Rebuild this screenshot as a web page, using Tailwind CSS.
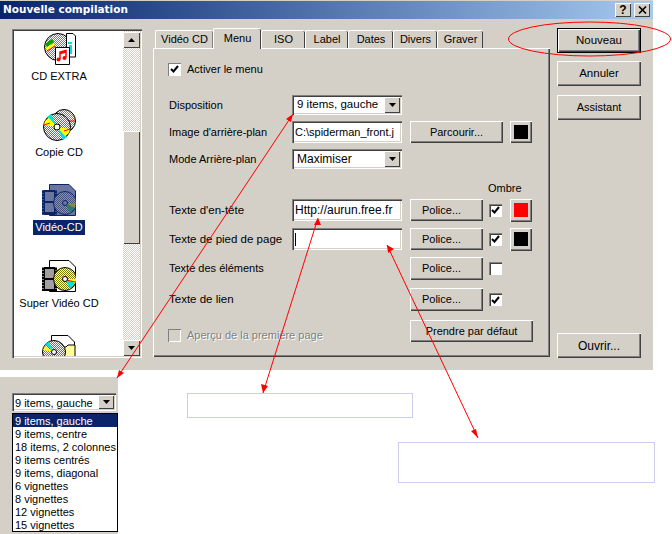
<!DOCTYPE html>
<html lang="fr">
<head>
  <meta charset="UTF-8" />
  <title>Nouvelle compilation</title>
  <script src="https://cdn.jsdelivr.net/npm/@tailwindcss/browser@4"></script>
</head>
<body class="bg-white">
  <div class="relative w-[672px] h-[534px] overflow-hidden bg-white font-['Liberation_Sans',Arial,sans-serif] text-[11px] text-black">

    <!-- fenetre -->
    <div class="w-[653px] h-[370px] bg-[#d4d0c8] pt-px flex flex-col">
      <div class="h-[18px] flex items-center justify-between pl-[3px] pr-[3px] bg-gradient-to-r from-[#0a246a] to-[#a6caf0]">
        <span class="font-['DejaVu_Sans',sans-serif] font-bold text-[10.5px] text-white">Nouvelle compilation</span>
        <div class="flex gap-[3px]">
          <div class="w-[16px] h-[14px] bg-[#d4d0c8] flex items-center justify-center font-bold text-[12px] leading-none shadow-[inset_1px_1px_0_#fff,inset_-1px_-1px_0_#404040]">?</div>
          <div class="w-[16px] h-[14px] bg-[#d4d0c8] flex items-center justify-center shadow-[inset_1px_1px_0_#fff,inset_-1px_-1px_0_#404040]">
            <svg width="9" height="8" viewBox="0 0 9 8"><path d="M1 0.5L8 7.5M8 0.5L1 7.5" stroke="#000" stroke-width="1.6" fill="none"/></svg>
          </div>
        </div>
      </div>

      <div class="flex pl-[12px] pt-[9px]">
        <!-- liste des types -->
        <div class="w-[130px] h-[329px] mt-px p-[2px] flex shadow-[inset_1px_1px_0_#808080,inset_2px_2px_0_#404040,inset_-1px_-1px_0_#fff,inset_-2px_-2px_0_#d4d0c8]">
          <div class="w-[109px] h-[325px] bg-white overflow-hidden pt-[2px]">
            <div class="w-[90px] flex flex-col items-center">
              <div class="h-[75.5px] flex flex-col items-center shrink-0">
                <svg width="34" height="32" viewBox="0 0 34 32">
                  <defs>
                    <pattern id="grisTrame" width="2" height="2" patternUnits="userSpaceOnUse"><rect width="2" height="2" fill="#fff"/><rect width="1" height="1" fill="#808080"/><rect x="1" y="1" width="1" height="1" fill="#808080"/></pattern>
                    <pattern id="oliveTrame" width="2" height="2" patternUnits="userSpaceOnUse"><rect width="2" height="2" fill="#fff"/><rect width="1" height="1" fill="#808000"/><rect x="1" y="1" width="1" height="1" fill="#808000"/></pattern>
                    <pattern id="bleuTrame" width="2" height="2" patternUnits="userSpaceOnUse"><rect width="2" height="2" fill="#8a92b4"/><rect width="1" height="1" fill="#40507f"/><rect x="1" y="1" width="1" height="1" fill="#40507f"/></pattern>
                  </defs>
                  <circle cx="16" cy="14" r="13.5" fill="url(#grisTrame)" stroke="#000"/>
                  <path d="M3 11L10 6L12 9L5 14Z" fill="#00a000"/>
                  <path d="M3.5 15L12 10L13 12L5 18Z" fill="#ff0"/>
                  <path d="M5 18L13 13" stroke="#f00"/>
                  <path d="M24.5 0.5H31L33.500 3V24H24.500Z" fill="#fff" stroke="#000"/>
                  <rect x="26" y="9" width="4" height="2" fill="#00e0e0"/>
                  <rect x="27" y="12" width="3" height="9" fill="#00e0e0"/>
                  <path d="M13.500 14.500H27.500V31.500H13.500Z" fill="#fff" stroke="#000"/>
                  <path d="M18 26V19L24 17.500V24.500M18 20.500L24 19" stroke="#f00" stroke-width="1.500" fill="none"/>
                  <circle cx="16.500" cy="26.500" r="2" fill="#f00"/><circle cx="22.500" cy="25" r="2" fill="#f00"/>
                </svg>
                <span class="mt-1 leading-[15px] whitespace-nowrap">CD EXTRA</span>
              </div>
              <div class="h-[75.5px] flex flex-col items-center shrink-0">
                <svg width="34" height="32" viewBox="0 0 34 32">
                  <circle cx="22" cy="12" r="11.500" fill="url(#grisTrame)" stroke="#000"/>
                  <path d="M23 12L33 12" stroke="#f00"/>
                  <circle cx="15" cy="18" r="13.500" fill="url(#oliveTrame)" stroke="#000"/>
                  <path d="M15 18L5 8L9 5Z" fill="#00e0e0"/>
                  <path d="M15 18L2 16L3 12L7 9Z" fill="#ff0"/>
                  <path d="M15 18L25 28L21 31Z" fill="#00e0e0"/>
                  <path d="M15 18L28 20L27 24L23 27Z" fill="#ff0"/>
                  <path d="M2 16L8 14M22 22L28 20" stroke="#f00"/>
                  <circle cx="15" cy="18" r="3" fill="#fff" stroke="#000"/>
                </svg>
                <span class="mt-1 leading-[15px] whitespace-nowrap">Copie CD</span>
              </div>
              <div class="h-[75.5px] flex flex-col items-center shrink-0">
                <svg width="34" height="32" viewBox="0 0 34 32">
                  <path d="M7.500 0.500H27L33.500 7V31.500H7.500Z" fill="#6a76a0" stroke="#0a246a"/>
                  <rect x="0" y="6" width="15" height="25" fill="#0a246a"/>
                  <rect x="3" y="8" width="9" height="9" fill="#6a76a0"/>
                  <rect x="3" y="19" width="9" height="9" fill="#6a76a0"/>
                  <path d="M1 6V31M14 6V31" stroke="#6a76a0" stroke-dasharray="1 2"/>
                  <circle cx="23" cy="19" r="11.500" fill="url(#bleuTrame)" stroke="#0a246a"/>
                  <path d="M23 19L33 24L28 29Z" fill="#2a7a7a"/>
                  <path d="M23 19L33 20L33 24Z" fill="#8a8a40"/>
                  <circle cx="23" cy="19" r="2.500" fill="#6a76a0" stroke="#0a246a"/>
                </svg>
                <span class="mt-1 px-[2px] leading-[15px] whitespace-nowrap bg-[#0a246a] text-white">Vidéo-CD</span>
              </div>
              <div class="h-[75.5px] flex flex-col items-center shrink-0">
                <svg width="34" height="32" viewBox="0 0 34 32">
                  <path d="M7.500 0.500H27L33.500 7V31.500H7.500Z" fill="#fff" stroke="#000"/>
                  <rect x="0" y="7" width="15" height="24" fill="#000"/>
                  <rect x="3" y="9" width="9" height="9" fill="#a0a0a0"/>
                  <rect x="3" y="20" width="9" height="9" fill="#a0a0a0"/>
                  <path d="M1 7V31M14 7V31" stroke="#fff" stroke-dasharray="1 2"/>
                  <circle cx="23" cy="19" r="11.500" fill="url(#oliveTrame)" stroke="#000"/>
                  <path d="M23 19L33 23L28 29Z" fill="#00e0e0"/>
                  <path d="M23 19L34 19L33 23Z" fill="#ff0"/>
                  <path d="M24 20L33 22" stroke="#f00"/>
                  <circle cx="23" cy="19" r="2.500" fill="#fff" stroke="#000"/>
                </svg>
                <span class="mt-1 leading-[15px] whitespace-nowrap">Super Vidéo CD</span>
              </div>
              <div class="h-[75.5px] flex flex-col items-center shrink-0">
                <svg width="34" height="32" viewBox="0 0 34 32">
                  <path d="M9.500 0.500H26L32.500 7V31.500H9.500Z" fill="#fff" stroke="#000"/>
                  <path d="M17 12H24L26 10H33V31H17Z" fill="#ffff99" stroke="#000"/>
                  <circle cx="12" cy="17" r="11.500" fill="url(#oliveTrame)" stroke="#000"/>
                  <path d="M12 17L3 9L7 7Z" fill="#00e0e0"/>
                  <path d="M12 17L1 15L3 11Z" fill="#ff0"/>
                  <circle cx="12" cy="17" r="2.500" fill="#fff" stroke="#000"/>
                </svg>
              </div>
            </div>
          </div>
          <!-- ascenseur -->
          <div class="w-[17px] h-[325px] flex flex-col bg-[repeating-conic-gradient(#d4d0c8_0_25%,#fff_0_50%)] bg-[length:2px_2px]">
            <div class="h-[16px] mt-px flex items-center justify-center bg-[#d4d0c8] shadow-[inset_1px_1px_0_#fff,inset_-1px_-1px_0_#404040]">
              <svg width="7" height="4" viewBox="0 0 7 4"><path d="M3.500 0L7 4H0Z" fill="#000"/></svg>
            </div>
            <div class="h-[113px] mt-[83px] bg-[#d4d0c8] shadow-[inset_1px_1px_0_#fff,inset_-1px_-1px_0_#404040]"></div>
            <div class="h-[16px] mt-auto flex items-center justify-center bg-[#d4d0c8] shadow-[inset_1px_1px_0_#fff,inset_-1px_-1px_0_#404040]">
              <svg width="7" height="4" viewBox="0 0 7 4"><path d="M0 0H7L3.500 4Z" fill="#000"/></svg>
            </div>
          </div>
        </div>

        <!-- onglets -->
        <div class="w-[397px] ml-[11px]">
          <div class="h-[20px] flex pl-[2px] items-end">
            <div class="w-[58px] h-[18px] flex items-center justify-center rounded-t-[2px] border-t border-l border-white shadow-[inset_-1px_0_0_#808080]">Vidéo CD</div>
            <div class="w-[48px] h-[21px] -mb-px pb-[2px] relative flex items-center justify-center bg-[#d4d0c8] rounded-t-[2px] border-t border-l border-white shadow-[inset_-1px_0_0_#404040]">Menu</div>
            <div class="w-[44px] h-[18px] flex items-center justify-center rounded-t-[2px] border-t border-l border-white shadow-[inset_-1px_0_0_#404040]">ISO</div>
            <div class="w-[43px] h-[18px] flex items-center justify-center rounded-t-[2px] border-t border-l border-white shadow-[inset_-1px_0_0_#404040]">Label</div>
            <div class="w-[45px] h-[18px] flex items-center justify-center rounded-t-[2px] border-t border-l border-white shadow-[inset_-1px_0_0_#404040]">Dates</div>
            <div class="w-[44px] h-[18px] flex items-center justify-center rounded-t-[2px] border-t border-l border-white shadow-[inset_-1px_0_0_#404040]">Divers</div>
            <div class="w-[46px] h-[18px] flex items-center justify-center rounded-t-[2px] border-t border-l border-white shadow-[inset_-1px_0_0_#404040]">Graver</div>
          </div>
          <div class="h-[309px] pl-[15px] pt-[13px] border-t border-l border-white shadow-[inset_-1px_-1px_0_#404040,inset_-2px_-2px_0_#808080]">
            <div class="flex items-center h-[14px] -ml-px">
              <div class="w-[13px] h-[13px] bg-white flex items-center justify-center shadow-[inset_1px_1px_0_#808080,inset_-1px_-1px_0_#fff]">
                <svg width="9" height="8" viewBox="0 0 9 8"><path d="M1 4L3.500 6.500L8 1" stroke="#000" stroke-width="2" fill="none"/></svg>
              </div>
              <span class="ml-[6px]">Activer le menu</span>
            </div>

            <div class="flex items-center h-[20px] mt-[19px]">
              <span class="w-[123px]">Disposition</span>
              <div class="w-[110px] h-[20px] bg-white pl-[5px] pr-[2px] flex items-center justify-between text-[11.5px] shadow-[inset_1px_1px_0_#808080,inset_2px_2px_0_#404040,inset_-1px_-1px_0_#fff,inset_-2px_-2px_0_#d4d0c8]">
                <span>9 items, gauche</span>
                <div class="w-[16px] h-[16px] bg-[#d4d0c8] flex items-center justify-center shadow-[inset_1px_1px_0_#fff,inset_-1px_-1px_0_#404040]">
                  <svg width="7" height="4" viewBox="0 0 7 4"><path d="M0 0H7L3.500 4Z" fill="#000"/></svg>
                </div>
              </div>
            </div>

            <div class="flex items-center h-[22px] mt-[6px]">
              <span class="w-[123px]">Image d'arrière-plan</span>
              <div class="w-[110px] h-[22px] bg-white pl-[3px] pr-[2px] flex items-center overflow-hidden whitespace-nowrap shadow-[inset_1px_1px_0_#808080,inset_2px_2px_0_#404040,inset_-1px_-1px_0_#fff,inset_-2px_-2px_0_#d4d0c8]">C:\spiderman_front.j</div>
              <div class="w-[93px] h-[22px] ml-[8px] bg-[#d4d0c8] flex items-center justify-center shadow-[inset_1px_1px_0_#fff,inset_-1px_-1px_0_#404040,inset_-2px_-2px_0_#808080]">Parcourir...</div>
              <div class="w-[22px] h-[22px] ml-[7px] flex items-center justify-center shadow-[inset_1px_1px_0_#fff,inset_-1px_-1px_0_#404040,inset_-2px_-2px_0_#808080]"><div class="w-[14px] h-[14px] bg-black"></div></div>
            </div>

            <div class="flex items-center h-[20px] mt-[6px]">
              <span class="w-[123px]">Mode Arrière-plan</span>
              <div class="w-[110px] h-[20px] bg-white pl-[5px] pr-[2px] flex items-center justify-between shadow-[inset_1px_1px_0_#808080,inset_2px_2px_0_#404040,inset_-1px_-1px_0_#fff,inset_-2px_-2px_0_#d4d0c8]">
                <span class="text-[12px]">Maximiser</span>
                <div class="w-[16px] h-[16px] bg-[#d4d0c8] flex items-center justify-center shadow-[inset_1px_1px_0_#fff,inset_-1px_-1px_0_#404040]">
                  <svg width="7" height="4" viewBox="0 0 7 4"><path d="M0 0H7L3.500 4Z" fill="#000"/></svg>
                </div>
              </div>
            </div>

            <div class="h-[15px] leading-[15px] mt-[12px] ml-[319px]">Ombre</div>

            <div class="flex items-center h-[22px] mt-[3px]">
              <span class="w-[123px] pt-[2px] text-[11.5px]">Texte d'en-tête</span>
              <div class="w-[110px] h-[22px] bg-white pl-[3px] flex items-center whitespace-nowrap text-[12px] shadow-[inset_1px_1px_0_#808080,inset_2px_2px_0_#404040,inset_-1px_-1px_0_#fff,inset_-2px_-2px_0_#d4d0c8]">Http://aurun.free.fr</div>
              <div class="w-[73px] h-[22px] ml-[8px] pr-[10px] flex items-center justify-center shadow-[inset_1px_1px_0_#fff,inset_-1px_-1px_0_#404040,inset_-2px_-2px_0_#808080]">Police...</div>
              <div class="w-[13px] h-[13px] ml-[6px] bg-white flex items-center justify-center shadow-[inset_1px_1px_0_#808080,inset_2px_2px_0_#404040,inset_-1px_-1px_0_#fff]">
                <svg width="9" height="8" viewBox="0 0 9 8"><path d="M1 4L3.500 6.500L8 1" stroke="#000" stroke-width="2" fill="none"/></svg>
              </div>
              <div class="w-[22px] h-[23px] ml-[8px] flex items-center justify-center shadow-[inset_1px_1px_0_#fff,inset_-1px_-1px_0_#404040,inset_-2px_-2px_0_#808080]"><div class="w-[14px] h-[14px] bg-[#ff0000]"></div></div>
            </div>

            <div class="flex items-center h-[22px] mt-[7px]">
              <span class="w-[123px] pt-[2px] text-[11.5px]">Texte de pied de page</span>
              <div class="w-[110px] h-[22px] bg-white pl-[3px] flex items-center shadow-[inset_1px_1px_0_#808080,inset_2px_2px_0_#404040,inset_-1px_-1px_0_#fff,inset_-2px_-2px_0_#d4d0c8]"><div class="w-px h-[13px] bg-black"></div></div>
              <div class="w-[73px] h-[22px] ml-[8px] pr-[10px] flex items-center justify-center shadow-[inset_1px_1px_0_#fff,inset_-1px_-1px_0_#404040,inset_-2px_-2px_0_#808080]">Police...</div>
              <div class="w-[13px] h-[13px] ml-[6px] bg-white flex items-center justify-center shadow-[inset_1px_1px_0_#808080,inset_2px_2px_0_#404040,inset_-1px_-1px_0_#fff]">
                <svg width="9" height="8" viewBox="0 0 9 8"><path d="M1 4L3.500 6.500L8 1" stroke="#000" stroke-width="2" fill="none"/></svg>
              </div>
              <div class="w-[22px] h-[23px] ml-[8px] flex items-center justify-center shadow-[inset_1px_1px_0_#fff,inset_-1px_-1px_0_#404040,inset_-2px_-2px_0_#808080]"><div class="w-[14px] h-[14px] bg-black"></div></div>
            </div>

            <div class="flex items-center h-[23px] mt-[7px]">
              <span class="w-[241px]">Texte des éléments</span>
              <div class="w-[73px] h-[23px] pr-[10px] flex items-center justify-center shadow-[inset_1px_1px_0_#fff,inset_-1px_-1px_0_#404040,inset_-2px_-2px_0_#808080]">Police...</div>
              <div class="w-[13px] h-[13px] ml-[6px] bg-white shadow-[inset_1px_1px_0_#808080,inset_2px_2px_0_#404040,inset_-1px_-1px_0_#fff]"></div>
            </div>

            <div class="flex items-center h-[23px] mt-[8px]">
              <span class="w-[241px] pt-px text-[11.5px]">Texte de lien</span>
              <div class="w-[73px] h-[23px] pr-[10px] flex items-center justify-center shadow-[inset_1px_1px_0_#fff,inset_-1px_-1px_0_#404040,inset_-2px_-2px_0_#808080]">Police...</div>
              <div class="w-[13px] h-[13px] ml-[6px] bg-white flex items-center justify-center shadow-[inset_1px_1px_0_#808080,inset_2px_2px_0_#404040,inset_-1px_-1px_0_#fff]">
                <svg width="9" height="8" viewBox="0 0 9 8"><path d="M1 4L3.500 6.500L8 1" stroke="#000" stroke-width="2" fill="none"/></svg>
              </div>
            </div>

            <div class="flex h-[22px] mt-[9px]">
              <div class="w-[241px] flex items-center pt-[8px] -ml-px">
                <div class="w-[13px] h-[13px] shrink-0 shadow-[inset_1px_1px_0_#808080,inset_-1px_-1px_0_#fff]"></div>
                <span class="ml-[6px] text-[#808080] [text-shadow:1px_1px_0_#fff]">Aperçu de la première page</span>
              </div>
              <div class="w-[123px] h-[22px] ml-px flex items-center justify-center shadow-[inset_1px_1px_0_#fff,inset_-1px_-1px_0_#404040,inset_-2px_-2px_0_#808080]">Prendre par défaut</div>
            </div>
          </div>
        </div>

        <!-- boutons -->
        <div class="w-[84px] h-[330px] ml-[7px] flex flex-col text-[11.5px]">
          <div class="h-[25px] flex items-center justify-center border border-black shadow-[inset_1px_1px_0_#fff,inset_-1px_-1px_0_#404040,inset_-2px_-2px_0_#808080]">Nouveau</div>
          <div class="h-[25px] mt-[8px] flex items-center justify-center shadow-[inset_1px_1px_0_#fff,inset_-1px_-1px_0_#404040,inset_-2px_-2px_0_#808080]">Annuler</div>
          <div class="h-[25px] mt-[9px] flex items-center justify-center text-[11px] shadow-[inset_1px_1px_0_#fff,inset_-1px_-1px_0_#404040,inset_-2px_-2px_0_#808080]">Assistant</div>
          <div class="h-[25px] mt-auto flex items-center justify-center text-[12px] shadow-[inset_1px_1px_0_#fff,inset_-1px_-1px_0_#404040,inset_-2px_-2px_0_#808080]">Ouvrir...</div>
        </div>
      </div>
    </div>

    <!-- bas de page -->
    <div class="flex items-start mt-[7px]">
      <div class="w-[118px] h-[157px] shrink-0 bg-[#d4d0c8] pt-[16px] pl-[12px]">
        <div class="w-[104px] h-[18px] bg-white pl-[3px] pr-[2px] flex items-center justify-between shadow-[inset_1px_1px_0_#808080,inset_2px_2px_0_#404040,inset_-1px_-1px_0_#fff,inset_-2px_-2px_0_#d4d0c8]">
          <span class="pt-[2px]">9 items, gauche</span>
          <div class="w-[16px] h-[14px] bg-[#d4d0c8] flex items-center justify-center shadow-[inset_1px_1px_0_#fff,inset_-1px_-1px_0_#404040]">
            <svg width="7" height="4" viewBox="0 0 7 4"><path d="M0 0H7L3.500 4Z" fill="#000"/></svg>
          </div>
        </div>
        <ul class="w-[106px] mt-[2px] bg-white border border-black leading-[14px] whitespace-nowrap">
          <li class="h-[13px] pl-[2px] bg-[#0a246a] text-white">9 items, gauche</li>
          <li class="h-[13px] pl-[2px]">9 items, centre</li>
          <li class="h-[13px] pl-[2px]">18 items, 2 colonnes</li>
          <li class="h-[13px] pl-[2px]">9 items centrés</li>
          <li class="h-[13px] pl-[2px]">9 items, diagonal</li>
          <li class="h-[13px] pl-[2px]">6 vignettes</li>
          <li class="h-[13px] pl-[2px]">8 vignettes</li>
          <li class="h-[13px] pl-[2px]">12 vignettes</li>
          <li class="h-[13px] pl-[2px]">15 vignettes</li>
        </ul>
      </div>
      <div class="w-[226px] h-[25px] shrink-0 ml-[69px] mt-[16px] border border-[#ccccee]"></div>
      <div class="w-[257px] h-[41px] shrink-0 -ml-[15px] mt-[65px] border border-[#ccccee]"></div>
    </div>

    <!-- annotations -->
    <svg class="absolute left-0 top-0 pointer-events-none" width="672" height="534" viewBox="0 0 672 534" fill="none">
      <ellipse cx="589.500" cy="39" rx="81" ry="17" stroke="#f00"/>
      <path d="M293 114L117 378M318 218L263 393M387 245L478 438" stroke="#f00"/>
      <path d="M293 114L286 119L291 122Z M117 378L124 373L119 370Z M318 218L314 225L321 225Z M263 393L261 384L268 386Z M387 245L388 253L394 249Z M478 438L471 431L476 429Z" fill="#f00"/>
    </svg>
  </div>
</body>
</html>
